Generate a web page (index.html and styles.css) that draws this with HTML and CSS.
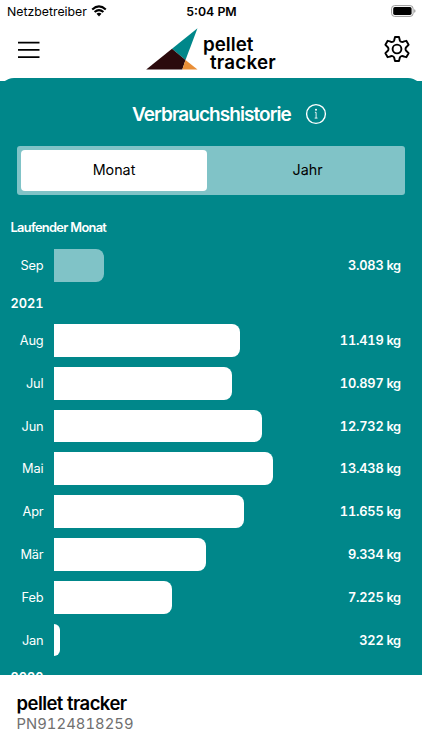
FILE: index.html
```html
<!DOCTYPE html>
<html lang="de">
<head>
<meta charset="utf-8">
<title>pellet tracker</title>
<link rel="stylesheet" href="styles.css">
</head>
<body>
<div class="status">
  <div class="carrier"><span>Netzbetreiber</span>
    <svg width="16" height="12" viewBox="0 0 16 12" fill="none" stroke="#000" stroke-width="2.1"><path d="M1.2 4.5Q8-1.7 14.8 4.5M3.6 7Q8 3.1 12.4 7"/><path d="M5.5 8.8Q8 6.9 10.5 8.8L8 11.4Z" fill="#000" stroke="none"/></svg>
  </div>
  <span class="time">5:04 PM</span>
  <svg class="battery" width="25" height="12" viewBox="0 0 25 12"><rect x=".6" y=".6" width="21.5" height="10.8" rx="3" fill="none" stroke="#999"/><rect x="2.2" y="2.1" width="18.4" height="7.8" rx="1.6"/><path d="M23.2 4.2Q24.5 4.5 24.5 6T23.2 7.8Z" fill="#999"/></svg>
</div>
<header class="header">
  <svg class="menu" width="22" height="18" viewBox="0 0 22 18" stroke="#000" stroke-width="1.7"><path d="M0 1.6H21.5M0 8.9H21.5M0 16.2H21.5"/></svg>
  <div class="logo">
    <svg width="52" height="42" viewBox="0 0 52 42"><path d="M51.5.3 26 20.8 39.5 32Z" fill="#00878a"/><path d="M26 20.8.2 41.6H36.3L39.5 32Z" fill="#2b0a0c"/><path d="M39.5 32 36.3 41.6H51.5Z" fill="#e98e36"/></svg>
    <div class="wordmark"><div class="pellet">pellet</div><div class="tracker">tracker</div></div>
  </div>
  <svg class="gear" width="28" height="28" viewBox="0 0 28 28" fill="none" stroke="#000" stroke-width="1.9" stroke-linejoin="round"><path d="M12 2H16L16.8 5.3Q17.3 6.6 18.6 6.9T21.2 6.3L23.3 5.8 25.6 9.8 23.4 12Q22.5 12.9 22.5 14T23.4 16L25.6 18.2 23.3 22.2 21.2 21.7Q19.9 20.8 18.6 21.1T16.8 22.7L16 26H12L11.2 22.7Q10.7 21.4 9.4 21.1T6.8 21.7L4.7 22.2 2.4 18.2 4.6 16Q5.5 15.1 5.5 14T4.6 12L2.4 9.8 4.7 5.8 6.8 6.3Q8.1 7.2 9.4 6.9T11.2 5.3Z"/><circle cx="14" cy="14" r="4.4"/></svg>
</header>
<main class="body">
  <section class="panel">
    <div class="title"><h1>Verbrauchshistorie</h1>
      <svg width="22" height="22" viewBox="0 0 22 22" fill="none" stroke="#fff" stroke-width="1.4"><circle cx="11" cy="11" r="9.4"/><path d="M9.9 9.3H11.1V15M9.7 15.1H12.5" stroke-width=".9"/><circle cx="11" cy="6.8" r="1" fill="#fff" stroke="none"/></svg>
    </div>
    <div class="tabs"><div class="tab active">Monat</div><div class="tab">Jahr</div></div>
    <h2 class="current">Laufender Monat</h2>
    <div class="row partial"><span class="month">Sep</span><div class="bar" style="width:50.4px"></div><span class="value">3.083<b>kg</b></span></div>
    <h2 class="year">2021</h2>
    <div class="row"><span class="month">Aug</span><div class="bar" style="width:186.2px"></div><span class="value">11.419<b>kg</b></span></div>
    <div class="row"><span class="month">Jul</span><div class="bar" style="width:177.8px"></div><span class="value">10.897<b>kg</b></span></div>
    <div class="row"><span class="month">Jun</span><div class="bar" style="width:207.7px"></div><span class="value">12.732<b>kg</b></span></div>
    <div class="row"><span class="month">Mai</span><div class="bar" style="width:219px"></div><span class="value">13.438<b>kg</b></span></div>
    <div class="row"><span class="month">Apr</span><div class="bar" style="width:190px"></div><span class="value">11.655<b>kg</b></span></div>
    <div class="row"><span class="month">Mär</span><div class="bar" style="width:152.4px"></div><span class="value">9.334<b>kg</b></span></div>
    <div class="row"><span class="month">Feb</span><div class="bar" style="width:117.9px"></div><span class="value">7.225<b>kg</b></span></div>
    <div class="row"><span class="month">Jan</span><div class="bar" style="width:5.6px"></div><span class="value">322<b>kg</b></span></div>
    <h2 class="year">2020</h2>
  </section>
</main>
<footer class="footer"><div class="name">pellet tracker</div><div class="serial">PN9124818259</div></footer>
</body>
</html>
```
FILE: styles.css
```css
* { box-sizing: border-box; }
body { margin: 0; width: 422px; height: 750px; display: flex; flex-direction: column; overflow: hidden; background: #fff; color: #000; font-family: Inter, "Liberation Sans", sans-serif; }
h1, h2 { margin: 0; }
svg { display: block; flex: none; }
.status { height: 22px; padding: 0 6px 0 7px; display: grid; grid-template-columns: 1fr auto 1fr; align-items: center; flex: none; }
.carrier { display: flex; gap: 4px; align-items: center; font-size: 12.3px; }
.time { font-size: 12.3px; font-weight: 600; }
.battery { justify-self: end; }
.header { height: 56px; flex: none; display: flex; align-items: flex-start; padding: 0 11px 0 18px; }
.menu { margin-top: 19px; }
.logo { display: flex; margin: 6px 0 0 106px; }
.wordmark { margin-left: 5px; font-weight: 600; font-size: 18.8px; line-height: 18px; padding-top: 8px; }
.tracker { padding-left: 7px; letter-spacing: .2px; }
.gear { margin: 13px 0 0 auto; }
.body { flex: 1; min-height: 0; overflow: hidden; background: linear-gradient(#fff 3px, #00878a 3px); }
.panel { background: #00878a; border-radius: 14px 14px 0 0; color: #fff; height: 100%; overflow: hidden; }
.title { height: 68px; padding: 4px 0 0 132px; display: flex; align-items: center; gap: 14px; }
.title h1 { font-size: 19px; font-weight: 600; letter-spacing: -.94px; }
.tabs { margin: 0 17px; height: 49px; padding: 4px; display: flex; background: #80c3c7; border-radius: 3px; color: #000; font-size: 14.3px; }
.tab { flex: 1; display: flex; align-items: center; justify-content: center; padding: 0 0 2px 7px; }
.tab.active { flex: 0 0 186px; padding-left: 0; background: #fff; border-radius: 4px; }
.current { margin: 24px 0 0 10.5px; height: 30px; line-height: 18px; font-size: 12.8px; font-weight: 600; letter-spacing: -.66px; }
.row { height: 32.8px; margin-bottom: 10px; padding-right: 21.5px; display: flex; align-items: center; }
.month { width: 43.5px; text-align: right; font-size: 12.8px; letter-spacing: -.15px; }
.bar { height: 100%; margin-left: 10.5px; background: #fff; border-radius: 0 8px 8px 0; }
.partial .bar { background: #80c3c7; }
.value { margin-left: auto; font-size: 12.8px; font-weight: 600; letter-spacing: -.2px; font-feature-settings: "tnum"; }
.value b { margin-left: 3px; font-weight: 600; letter-spacing: -.5px; }
.year { margin-left: 10.5px; height: 32.3px; line-height: 23px; font-size: 12.8px; font-weight: 600; font-feature-settings: "tnum"; }
.footer { height: 75px; flex: none; padding: 17px 16.5px 0; }
.name { font-size: 18.5px; line-height: 23px; font-weight: 600; letter-spacing: -.55px; }
.serial { font-size: 14.8px; line-height: 19px; color: #707070; letter-spacing: .05px; font-feature-settings: "tnum"; }
```
